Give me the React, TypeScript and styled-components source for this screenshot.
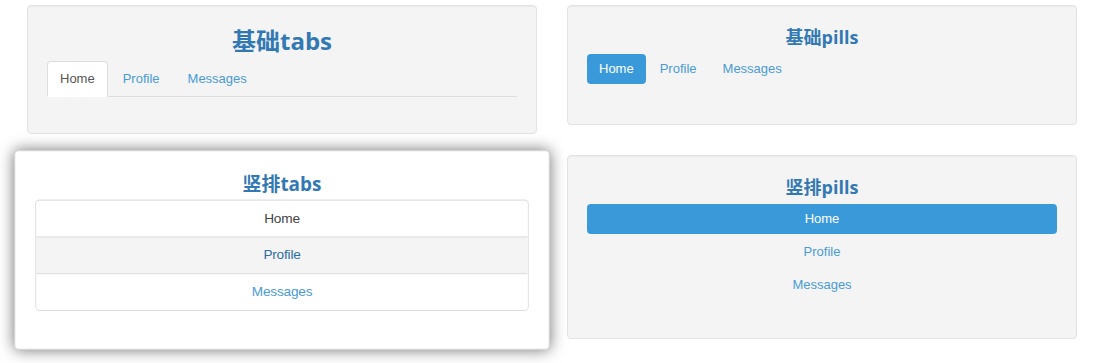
import React from "react"
import styled, { createGlobalStyle, css } from "styled-components"

const GlobalStyle = createGlobalStyle`
  html, body {
    margin: 0;
    padding: 0;
    background: #ffffff;
    font-family: "Liberation Sans", Arial, sans-serif;
    font-size: 13px;
  }
`

const Page = styled.div`
  display: grid;
  grid-template-columns: 510px 510px;
  column-gap: 30px;
  row-gap: 21px;
  min-height: 100vh;
  box-sizing: border-box;
  align-content: start;
  padding: 5px 0 18px 27px;
`

const Panel = styled.div<{ $raised?: boolean }>`
  background: #f4f4f4;
  border: 1px solid #e3e3e3;
  border-radius: 4px;
  padding: 18px 19px 18px;
  box-shadow: inset 0 1px 1px rgba(0, 0, 0, 0.04);
  align-self: start;

  ${props =>
    props.$raised &&
    css`
      background: #ffffff;
      border-color: #d8d8d8;
      transform: scale(1.05);
      box-shadow: 0 0 14px rgba(0, 0, 0, 0.55);
      position: relative;
      z-index: 1;
    `}
`

const Title = styled.h3<{ $big?: boolean; $gap?: number }>`
  margin: 0 0 ${props => props.$gap ?? 4}px;
  text-align: center;
  color: #3279b3;
  font-family: "Open Sans", "Noto Sans CJK SC", sans-serif;
  font-weight: 700;
  font-size: ${props => (props.$big ? "24px" : "18px")};
  line-height: ${props => (props.$big ? "34px" : "26px")};
`

const TabList = styled.ul`
  display: flex;
  list-style: none;
  margin: 0 0 18px;
  padding: 0;
  border-bottom: 1px solid #dddddd;
`

const Tab = styled.li<{ $active?: boolean }>`
  margin: 0 2px -1px 0;
  padding: 9px 12px;
  line-height: 16px;
  border: 1px solid transparent;
  border-radius: 4px 4px 0 0;
  color: ${props => (props.$active ? "#555555" : "#4a9bd4")};

  ${props =>
    props.$active &&
    css`
      background: #ffffff;
      border-color: #dddddd;
      border-bottom-color: #ffffff;
    `}
`

const PillList = styled.ul<{ $stacked?: boolean }>`
  display: flex;
  flex-direction: ${props => (props.$stacked ? "column" : "row")};
  gap: ${props => (props.$stacked ? "3px" : "2px")};
  list-style: none;
  margin: 0 0 ${props => (props.$stacked ? "20px" : "22px")};
  padding: 0;
  text-align: center;
`

const Pill = styled.li<{ $active?: boolean }>`
  padding: 7px 12px;
  line-height: 16px;
  border-radius: 4px;
  color: ${props => (props.$active ? "#ffffff" : "#4a9bd4")};
  background: ${props => (props.$active ? "#3a9ad9" : "transparent")};
`

const StackedTabs = styled.ul`
  list-style: none;
  margin: 0 0 18px;
  padding: 0;
  border: 1px solid #dddddd;
  border-radius: 4px;
  overflow: hidden;
`

const StackedTab = styled.li<{ $tone: "active" | "hover" | "idle" }>`
  padding: 9px 12px;
  line-height: 16px;
  text-align: center;
  letter-spacing: -0.2px;
  background: ${props => (props.$tone === "hover" ? "#f4f4f4" : "#ffffff")};
  color: ${props =>
    props.$tone === "active" ? "#444444" : props.$tone === "hover" ? "#2d6da3" : "#4a9bd4"};

  & + & {
    border-top: 1px solid #dddddd;
  }
`

const App = () => (
  <>
    <GlobalStyle />
    <Page>
      <Panel>
        <Title $big $gap={3}>基础tabs</Title>
        <TabList>
          <Tab $active>Home</Tab>
          <Tab>Profile</Tab>
          <Tab>Messages</Tab>
        </TabList>
      </Panel>
      <Panel>
        <Title>基础pills</Title>
        <PillList>
          <Pill $active>Home</Pill>
          <Pill>Profile</Pill>
          <Pill>Messages</Pill>
        </PillList>
      </Panel>
      <Panel $raised>
        <Title $gap={2}>竖排tabs</Title>
        <StackedTabs>
          <StackedTab $tone="active">Home</StackedTab>
          <StackedTab $tone="hover">Profile</StackedTab>
          <StackedTab $tone="idle">Messages</StackedTab>
        </StackedTabs>
      </Panel>
      <Panel>
        <Title>竖排pills</Title>
        <PillList $stacked>
          <Pill $active>Home</Pill>
          <Pill>Profile</Pill>
          <Pill>Messages</Pill>
        </PillList>
      </Panel>
    </Page>
  </>
)

export default App
